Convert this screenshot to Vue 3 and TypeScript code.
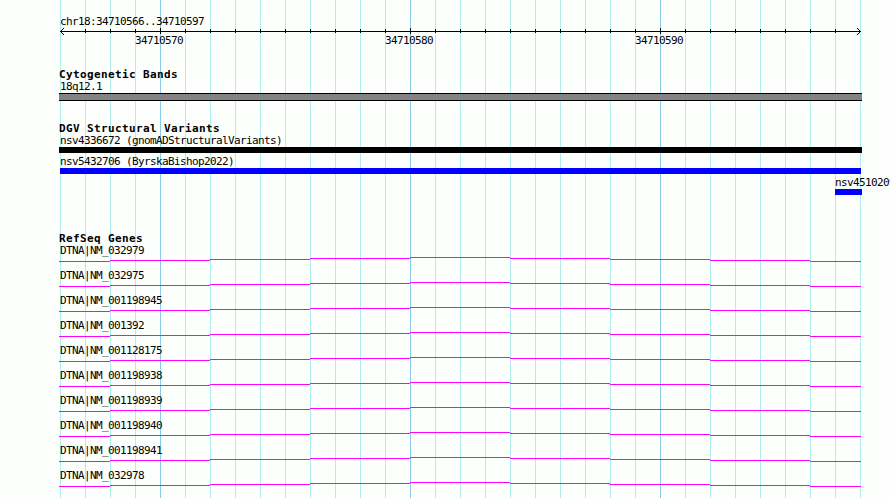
<script setup lang="ts">
interface Variant {
  label: string
  start: number
  width: number
  color: string
}

const ticks: number[] = Array.from({ length: 33 }, (_, i) => i * 25 + 1)
const isMajor = (x: number): boolean => (x - 101) % 250 === 0
const positions: string[] = ['34710570', '34710580', '34710590']

const variants: Variant[] = [
  { label: 'nsv4336672 (gnomADStructuralVariants)', start: 0, width: 803, color: '#000000' },
  { label: 'nsv5432706 (ByrskaBishop2022)', start: 1, width: 801, color: '#0000ff' },
  { label: 'nsv4510209', start: 776, width: 27, color: '#0000ff' },
]

const genes: string[] = [
  'NM_032979', 'NM_032975', 'NM_001198945', 'NM_001392', 'NM_001128175',
  'NM_001198938', 'NM_001198939', 'NM_001198940', 'NM_001198941', 'NM_032978',
]

// Intron hat: x, width and vertical step of each one-pixel segment
const segments: number[][] = [
  [0, 51, 4], [51, 100, 3], [151, 100, 2], [251, 100, 1], [351, 100, 0],
  [451, 100, 1], [551, 100, 2], [651, 100, 3], [751, 51, 4],
]
</script>

<template>
  <main class="browser">
    <svg class="grid" width="831" height="498" shape-rendering="crispEdges">
      <rect v-for="x in ticks" :key="x" :x="x" y="0" width="1" height="498" :class="isMajor(x) ? 'major' : 'minor'" />
    </svg>
    <div class="tracks">
      <header class="ruler">
        <div class="label">chr18:34710566..34710597</div>
        <svg class="axis" width="831" height="7" shape-rendering="crispEdges">
          <rect x="1" y="3" width="801" height="1" />
          <rect
            v-for="x in ticks.slice(1, -1)" :key="x" :x="x"
            :y="isMajor(x) ? 0 : 1" width="1" :height="isMajor(x) ? 6 : 4"
          />
          <path d="M2 2h1v1h-1zM3 1h1v1h-1zM4 0h1v1h-1zM2 4h1v1h-1zM3 5h1v1h-1zM4 6h1v1h-1z" />
          <path d="M800 2h1v1h-1zM799 1h1v1h-1zM798 0h1v1h-1zM800 4h1v1h-1zM799 5h1v1h-1zM798 6h1v1h-1z" />
        </svg>
        <div class="positions">
          <span v-for="p in positions" :key="p">{{ p }}</span>
        </div>
      </header>
      <section class="cyto">
        <h2>Cytogenetic Bands</h2>
        <div class="label">18q12.1</div>
        <div class="band"></div>
      </section>
      <section class="variants">
        <h2>DGV Structural Variants</h2>
        <div v-for="v in variants" :key="v.label" class="variant">
          <div class="label" :style="{ marginLeft: (v.start > 1 ? v.start - 1 : 0) + 'px' }">{{ v.label }}</div>
          <div class="bar" :style="{ marginLeft: v.start + 'px', width: v.width + 'px', background: v.color }"></div>
        </div>
      </section>
      <section class="genes">
        <h2>RefSeq Genes</h2>
        <div v-for="g in genes" :key="g" class="gene">
          <div class="label">DTNA|{{ g }}</div>
          <svg class="intron" width="831" height="5" shape-rendering="crispEdges">
            <rect v-for="s in segments" :key="s[0]" :x="s[0]" :y="s[2]" :width="s[1]" height="1" />
          </svg>
        </div>
      </section>
    </div>
  </main>
</template>

<style>
body {
  margin: 0;
  overflow: hidden;
  background: #fdfffc;
}
</style>

<style scoped>
.browser {
  position: relative;
  box-sizing: border-box;
  width: 890px;
  height: 498px;
  padding: 15px 0 0 59px;
  overflow: hidden;
  background: #fdfffc;
  color: #000;
  font: 11px/14px "DejaVu Sans Mono", monospace;
  letter-spacing: -0.622px;
  white-space: pre;
}
.grid {
  position: absolute;
  top: 0;
  left: 59px;
}
.minor { fill: #afeeee; }
.major { fill: #87ceeb; }
.tracks { position: relative; }
svg { display: block; }
.label {
  height: 12px;
  padding-left: 1px;
}
.axis { margin-top: 1px; }
.positions {
  display: flex;
  height: 12px;
  margin-top: -1px;
  padding-left: 76px;
}
.positions span { width: 250px; }
h2 {
  height: 12px;
  margin: 0;
  font-size: 11px;
  line-height: 14px;
  font-weight: bold;
  letter-spacing: 0.378px;
}
.cyto { margin-top: 22px; }
.band {
  box-sizing: border-box;
  width: 803px;
  height: 8px;
  margin-top: 1px;
  border: solid #000;
  border-width: 1px 0;
  background: #848284;
}
.variants { margin-top: 21px; }
.variant { height: 21px; }
.bar {
  height: 6px;
  margin-top: 1px;
}
.genes { margin-top: 35px; }
.gene { height: 25px; }
.intron {
  margin-top: 1px;
  fill: #ff00ff;
}
</style>
